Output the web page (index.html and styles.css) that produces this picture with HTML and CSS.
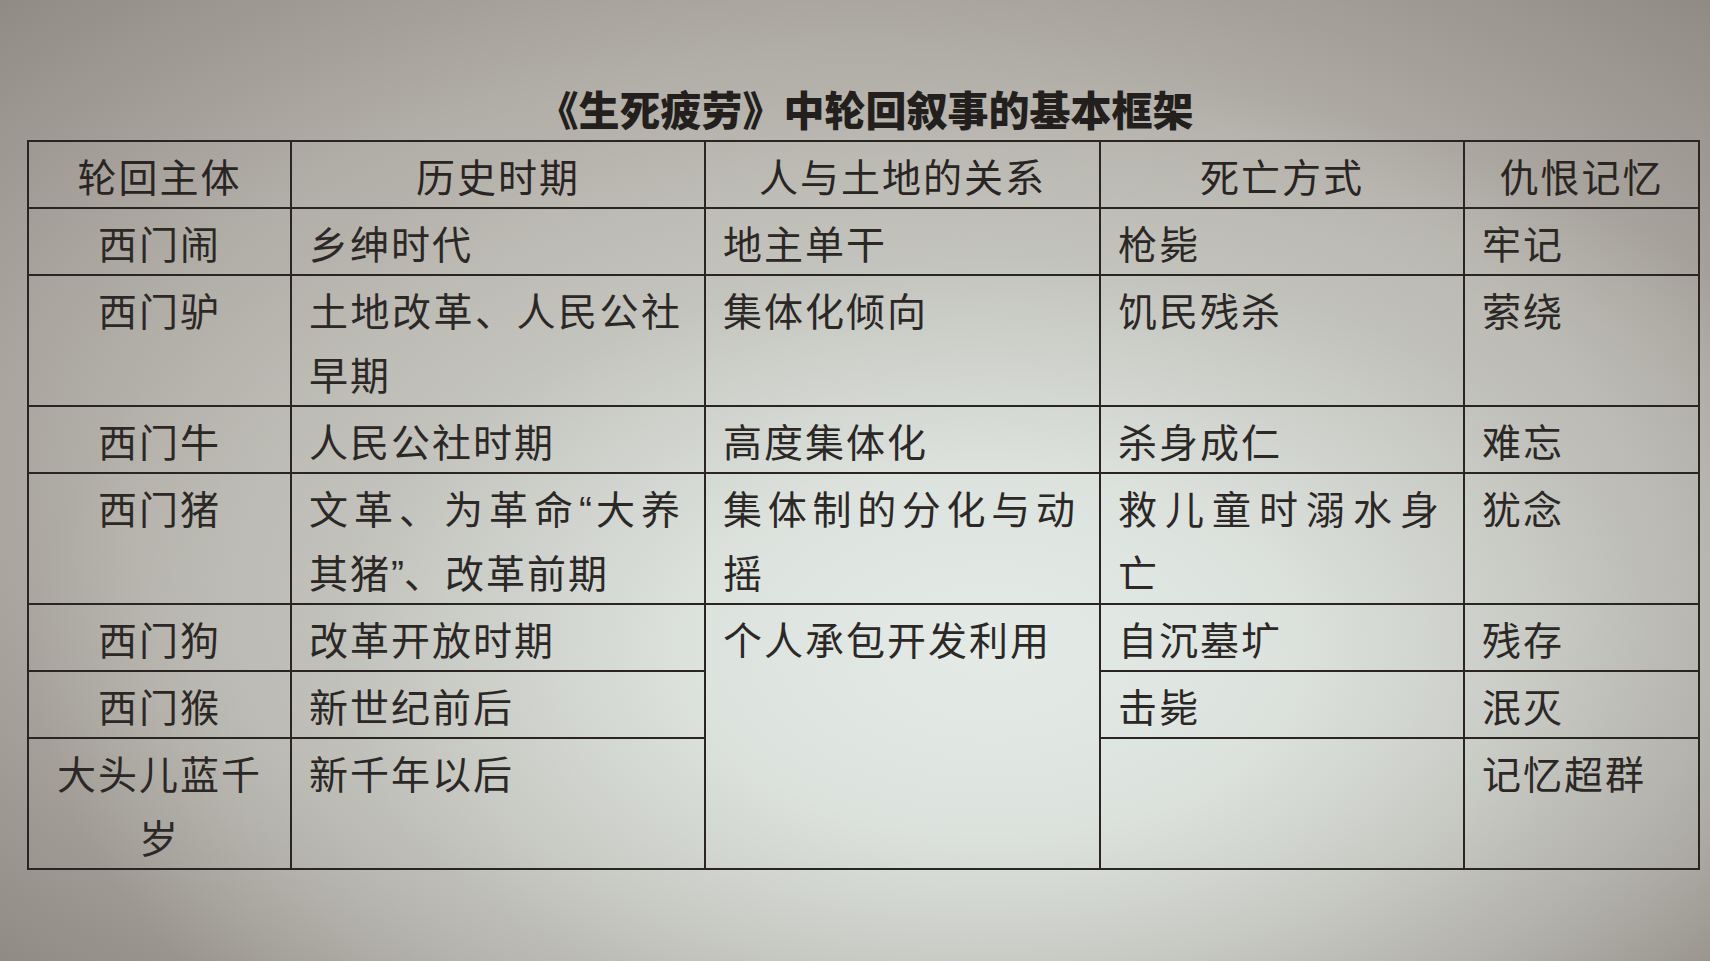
FILE: index.html
```html
<!DOCTYPE html>
<html lang="zh-CN">
<head>
<meta charset="utf-8">
<title>《生死疲劳》中轮回叙事的基本框架</title>
<link rel="stylesheet" href="styles.css">
</head>
<body>
<div class="page">
  <h1 class="title">《生死疲劳》中轮回叙事的基本框架</h1>
  <table class="grid">
    <colgroup>
      <col class="c1"><col class="c2"><col class="c3"><col class="c4"><col class="c5">
    </colgroup>
    <thead>
      <tr>
        <th>轮回主体</th><th>历史时期</th><th>人与土地的关系</th><th>死亡方式</th><th>仇恨记忆</th>
      </tr>
    </thead>
    <tbody>
      <tr>
        <td class="name">西门闹</td><td>乡绅时代</td><td>地主单干</td><td>枪毙</td><td>牢记</td>
      </tr>
      <tr>
        <td class="name">西门驴</td><td>土地改革、人民公社早期</td><td>集体化倾向</td><td>饥民残杀</td><td>萦绕</td>
      </tr>
      <tr>
        <td class="name">西门牛</td><td>人民公社时期</td><td>高度集体化</td><td>杀身成仁</td><td>难忘</td>
      </tr>
      <tr>
        <td class="name">西门猪</td><td>文革、为革命<span class="q">“</span>大养其猪<span class="q">”</span>、改革前期</td><td>集体制的分化与动摇</td><td>救儿童时溺水身亡</td><td>犹念</td>
      </tr>
      <tr>
        <td class="name">西门狗</td><td>改革开放时期</td><td rowspan="3">个人承包开发利用</td><td>自沉墓圹</td><td>残存</td>
      </tr>
      <tr>
        <td class="name">西门猴</td><td>新世纪前后</td><td>击毙</td><td>泯灭</td>
      </tr>
      <tr>
        <td class="name">大头儿蓝千岁</td><td>新千年以后</td><td></td><td>记忆超群</td>
      </tr>
    </tbody>
  </table>
</div>
</body>
</html>
```
FILE: styles.css
```css
html, body {
  margin: 0;
  padding: 0;
  height: 100%;
}

body {
  width: 1710px;
  height: 961px;
  overflow: hidden;
  font-family: "Noto Sans CJK SC", "Noto Sans", sans-serif;
  color: #2c2826;
  background:
    radial-gradient(ellipse 70% 75% at 58% 68%, rgba(228,235,231,1) 0%, rgba(222,228,223,0.95) 25%, rgba(200,202,196,0.6) 55%, rgba(160,156,150,0) 80%),
    radial-gradient(ellipse 95% 95% at 50% 50%, #c4c2bb 0%, #b3b0a9 45%, #908a84 75%, #6a6561 100%);
}

.page {
  padding-top: 88px;
  padding-left: 27px;
}

.title {
  margin: 0 0 11px 0;
  width: 1671px;
  text-align: center;
  font-size: 41px;
  line-height: 41px;
  font-weight: 900;
  color: #231f1c;
  padding-left: 6px;
  box-sizing: border-box;
}

.grid {
  border-collapse: collapse;
  table-layout: fixed;
  width: 1671px;
  border: 2px solid #2a2522;
}

.c1 { width: 263px; }
.c2 { width: 414px; }
.c3 { width: 395px; }
.c4 { width: 364px; }
.c5 { width: 235px; }

.grid th,
.grid td {
  border: 2px solid #2a2522;
  font-size: 39px;
  letter-spacing: 2px;
  line-height: 64px;
  font-weight: 400;
  vertical-align: top;
  padding: 1px 22px 0 17px;
}

.grid th {
  text-align: center;
  color: #2a2523;
  padding: 1px 18px 0 18px;
}

.grid td {
  text-align: justify;
}

.grid td.name {
  text-align: center;
  padding: 1px 14px 0 14px;
}

.q {
  font-family: "Liberation Sans", sans-serif;
  letter-spacing: 0;
  line-height: 0;
}
```
